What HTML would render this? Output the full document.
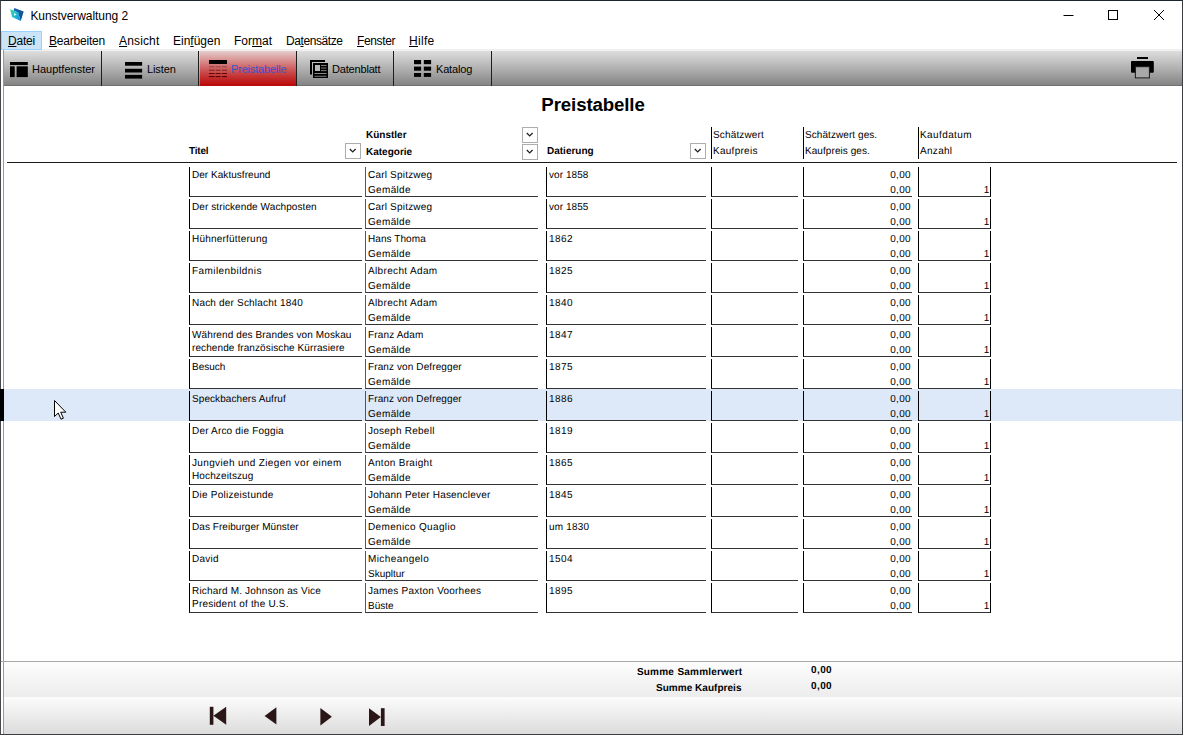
<!DOCTYPE html>
<html lang="de"><head><meta charset="utf-8"><title>Kunstverwaltung 2</title>
<style>
*{box-sizing:border-box;margin:0;padding:0}
html,body{width:1183px;height:735px;overflow:hidden;background:#fff}
body{position:relative;font-family:"Liberation Sans",sans-serif;font-size:10px;color:#000}
.abs{position:absolute}
#win{position:absolute;left:0;top:0;width:1183px;height:735px;border:1px solid #3a3d42;border-top-color:#1c2530;border-left-color:#44474c}
#title{position:absolute;left:30.4px;top:8px;font-size:12px;line-height:16px;color:#000;white-space:nowrap;letter-spacing:-0.06px}
#menu{z-index:3;position:absolute;left:1px;top:31px;height:19px;width:1181px;font-size:12px;line-height:19px;white-space:nowrap}
#menu span.m{position:absolute;top:1px;height:19px;z-index:4}
#menu u{text-decoration:underline;text-underline-offset:1px}
#menu .hl{z-index:3;position:absolute;left:0;top:0;width:41px;height:19px;background:#cce4f7;border:1px solid #99d1ff}
#tb{position:absolute;left:4px;top:49px;width:1178px;height:37px;background:linear-gradient(#f0f0f0 0,#f0f0f0 2px,#dddddd 2px,#b2b2b2 19px,#848484 36px,#707070 36px,#707070 37px)}
.tbtn{position:absolute;top:2px;height:35px;font-size:11px;line-height:35px;white-space:nowrap}
.sep{position:absolute;top:2px;width:1px;height:35px;background:#1e1e1e}
.tbtn svg{position:absolute}
.tbtn .t{position:absolute;top:0.5px}
#lline{position:absolute;left:3px;top:50px;width:1px;height:684px;background:#9a9a9a}
#h1{position:absolute;left:0;top:94px;width:1183px;text-align:center;font-size:18.67px;font-weight:bold;line-height:22px;padding-left:3px;letter-spacing:-0.12px}
.hd{position:absolute;font-weight:bold;font-size:10px;line-height:12px;white-space:nowrap;transform:skewX(0.05deg) scaleY(1.02);transform-origin:0 10px}
.hn{position:absolute;font-size:10px;line-height:12px;white-space:nowrap;transform:skewX(0.05deg) scaleY(1.02);transform-origin:0 10px}
.dd{position:absolute;width:16px;height:16px;border:1px solid #adadad;background:#fff}
.dd svg{position:absolute;left:0;top:0}
.vb{position:absolute;width:1px;background:#000}
#hline{position:absolute;left:7px;top:162px;width:1170px;height:1px;background:#1a1a1a}
.row{position:absolute;left:4px;width:1178px;height:32px}
.row.sel{background:#dde9f9}
.f{position:absolute;top:2px;height:30px;border-left:1px solid #000;border-bottom:1px solid #333;font-size:10px;line-height:13px;white-space:nowrap;padding:2px 0 0 2px}
.f1{left:185px;width:173px}
.f2{left:361px;width:173px;border-left-color:#555}
.f3{left:542px;width:160px}
.f4{left:707px;width:87px}
.f5{left:799px;width:109px;text-align:right;padding-right:2px}
.f6{left:914px;width:73px;border-right:1px solid #000;text-align:right;padding-right:1px}
.f .tx{position:absolute;left:1.5px;top:1px;line-height:13px;transform:skewX(0.05deg) scaleY(1.02);transform-origin:0 10px}
.f .l1,.f .l2{position:absolute;left:1.6px;right:2px;line-height:13px;transform:skewX(0.05deg) scaleY(1.02);transform-origin:0 10px}
.f .l1{top:1px}.f .l2{top:16px}
.f6 .l2{right:1px}
#fline{position:absolute;left:1px;top:661px;width:1181px;height:1px;background:#a8a8a8}
#sum{position:absolute;left:4px;top:662px;width:1178px;height:35px;background:linear-gradient(#fdfdfd,#ececec)}
#nav{position:absolute;left:4px;top:697px;width:1178px;height:37px;background:linear-gradient(#fcfcfc,#dcdcdc)}
.sb{position:absolute;font-weight:bold;font-size:10px;line-height:12px;white-space:nowrap;transform:skewX(0.05deg) scaleY(1.02);transform-origin:0 10px}
.f5 .l1,.f5 .l2{right:1.5px}
</style></head>
<body>
<div id="win"></div>
<svg class="abs" style="left:8px;top:6px" width="18" height="18" viewBox="0 0 18 18"><defs><linearGradient id="gf" x1="0" y1="0" x2="1" y2="0.6"><stop offset="0" stop-color="#45d6a2"/><stop offset="0.5" stop-color="#25c0c8"/><stop offset="1" stop-color="#1598e6"/></linearGradient><linearGradient id="gb" x1="0" y1="0" x2="1" y2="1"><stop offset="0" stop-color="#1668b0"/><stop offset="1" stop-color="#0f4a86"/></linearGradient></defs><path d="M6.3 2 L15.7 5.4 L12.7 15.2 L10 6.4 L5.6 4.4 Z" fill="url(#gb)"/><path d="M2 3.2 L10.2 6.2 L12.7 15 L4.1 10.9 Z" fill="url(#gf)"/><path d="M5.9 6.9 L8.5 8.2 L6.4 9.9 Z" fill="#eafffb"/></svg>
<div id="title">Kunstverwaltung 2</div>
<svg class="abs" style="left:1060px;top:5px" width="120" height="22" viewBox="0 0 120 22"><path d="M3.5 10.5 H13.5" stroke="#000" stroke-width="1" fill="none"/><rect x="48.5" y="5.5" width="9" height="9" stroke="#000" stroke-width="1" fill="none"/><path d="M94 5 L104 15 M104 5 L94 15" stroke="#000" stroke-width="1" fill="none"/></svg>
<div id="menu"><div class="hl"></div>
<span class="m" style="left:7px;letter-spacing:-0.2px"><u>D</u>atei</span>
<span class="m" style="left:48px;letter-spacing:-0.2px"><u>B</u>earbeiten</span>
<span class="m" style="left:118px;letter-spacing:0.15px"><u>A</u>nsicht</span>
<span class="m" style="left:172px">Ein<u>f</u>ügen</span>
<span class="m" style="left:233px">For<u>m</u>at</span>
<span class="m" style="left:285px;letter-spacing:-0.42px">Da<u>t</u>ensätze</span>
<span class="m" style="left:356px;letter-spacing:-0.36px"><u>F</u>enster</span>
<span class="m" style="left:408px;letter-spacing:0.3px"><u>H</u>ilfe</span>
</div>
<div id="tb">
 <div class="tbtn" style="left:0;width:97px"><svg style="left:6px;top:10.6px" width="18" height="16" viewBox="0 0 18 16"><rect x="0" y="0" width="17.8" height="3.1" fill="#000"/><rect x="0" y="4.3" width="4.7" height="10.8" fill="#000"/><rect x="6.6" y="4.3" width="11.2" height="10.8" fill="#000"/></svg><span class="t" style="left:28px">Hauptfenster</span></div>
 <div class="sep" style="left:97px"></div>
 <div class="tbtn" style="left:99px;width:96px"><svg style="left:22px;top:10.7px" width="18" height="17" viewBox="0 0 18 17"><rect x="0" y="0" width="17.1" height="3.7" fill="#000"/><rect x="0" y="6.8" width="17.1" height="3.7" fill="#000"/><rect x="0" y="12.9" width="17.1" height="3.7" fill="#000"/></svg><span class="t" style="left:44px;letter-spacing:-0.1px">Listen</span></div>
 <div class="sep" style="left:194px"></div>
 <div class="tbtn" style="left:196px;width:96px;background:linear-gradient(#e6cccc 0,#dba0a0 7px,#ce6262 17px,#c43030 26px,#bd1010 33px,#b40a0a 35px);color:#3a55c8"><svg style="left:9px;top:9px" width="18" height="18" viewBox="0 0 18 18"><rect x="0" y="0" width="18" height="4" fill="#000"/><g fill="#8c4646"><rect x="0" y="6.3" width="5.6" height="1"/><rect x="6.6" y="6.3" width="5" height="1"/><rect x="12.8" y="6.3" width="5.2" height="1"/></g><g fill="#7a2424"><rect x="0" y="9.7" width="5.6" height="1"/><rect x="6.6" y="9.7" width="5" height="1"/><rect x="12.8" y="9.7" width="5.2" height="1"/></g><g fill="#5a0808"><rect x="0" y="13" width="5.6" height="1"/><rect x="6.6" y="13" width="5" height="1"/><rect x="12.8" y="13" width="5.2" height="1"/></g><g fill="#4a0000"><rect x="0" y="16.1" width="5.6" height="1"/><rect x="6.6" y="16.1" width="5" height="1"/><rect x="12.8" y="16.1" width="5.2" height="1"/></g></svg><span class="t" style="left:31px;letter-spacing:-0.17px">Preistabelle</span></div>
 <div class="sep" style="left:292px"></div>
 <div class="tbtn" style="left:294px;width:96px"><svg style="left:12px;top:9px" width="18" height="18" viewBox="0 0 18 18"><path d="M0 0 H15 V1.9 H2 V14.6 H0 Z" fill="#000"/><rect x="3" y="3" width="15" height="15" fill="#000"/><rect x="5" y="5" width="5" height="6" fill="#b8b8b8"/><rect x="11" y="5" width="5.5" height="0.9" fill="#8c8c8c"/><rect x="11" y="7.6" width="5.5" height="0.9" fill="#8c8c8c"/><rect x="11" y="10.2" width="5.5" height="0.9" fill="#8c8c8c"/><rect x="4.5" y="13.1" width="12" height="0.9" fill="#9a9a9a"/><rect x="4.5" y="15.8" width="12" height="0.9" fill="#8a8a8a"/></svg><span class="t" style="left:34px;letter-spacing:-0.18px">Datenblatt</span></div>
 <div class="sep" style="left:389px"></div>
 <div class="tbtn" style="left:392px;width:95px"><svg style="left:18px;top:9px" width="18" height="17" viewBox="0 0 18 17"><rect x="0" y="0" width="7.1" height="4.2" fill="#000"/><rect x="9.8" y="0" width="7.3" height="4.2" fill="#000"/><rect x="0" y="6.6" width="7.1" height="4.1" fill="#000"/><rect x="9.8" y="6.6" width="7.3" height="4.1" fill="#000"/><rect x="0" y="13" width="7.1" height="3.9" fill="#000"/><rect x="9.8" y="13" width="7.3" height="3.9" fill="#000"/></svg><span class="t" style="left:40px;letter-spacing:-0.17px">Katalog</span></div>
 <div class="sep" style="left:487px"></div>
 <svg class="abs" style="left:1127px;top:8px" width="24" height="23" viewBox="0 0 24 23"><rect x="6" y="0" width="11" height="2" fill="#000"/><path d="M1 4 H21.8 Q22.8 4 22.8 5 V14.8 Q22.8 15.8 21.8 15.8 H1 Q0 15.8 0 14.8 V5 Q0 4 1 4 Z" fill="#000"/><rect x="4.4" y="9.7" width="14" height="11.2" fill="#a8a8a8" stroke="#1a1a1a" stroke-width="1"/></svg>
</div>
<div id="lline"></div>
<div id="h1">Preistabelle</div>
<div class="hd" style="left:189px;top:145px;letter-spacing:-0.2px">Titel</div>
<div class="hd" style="left:366px;top:129px">Künstler</div>
<div class="hd" style="left:366px;top:146px">Kategorie</div>
<div class="hd" style="left:547px;top:145px">Datierung</div>
<div class="dd" style="left:345px;top:143px"><svg width="14" height="14" viewBox="0 0 14 14"><path d="M3.8 5 L6.7 7.9 L9.6 5" fill="none" stroke="#222" stroke-width="1.35"/></svg></div>
<div class="dd" style="left:522px;top:127px"><svg width="14" height="14" viewBox="0 0 14 14"><path d="M3.8 5 L6.7 7.9 L9.6 5" fill="none" stroke="#222" stroke-width="1.35"/></svg></div>
<div class="dd" style="left:522px;top:144px"><svg width="14" height="14" viewBox="0 0 14 14"><path d="M3.8 5 L6.7 7.9 L9.6 5" fill="none" stroke="#222" stroke-width="1.35"/></svg></div>
<div class="dd" style="left:690px;top:143px"><svg width="14" height="14" viewBox="0 0 14 14"><path d="M3.8 5 L6.7 7.9 L9.6 5" fill="none" stroke="#222" stroke-width="1.35"/></svg></div>
<div class="vb" style="left:711px;top:127px;height:32px"></div>
<div class="vb" style="left:803px;top:127px;height:32px"></div>
<div class="vb" style="left:918px;top:127px;height:32px"></div>
<div class="hn" style="left:713.2px;top:129px;letter-spacing:0.15px">Schätzwert</div>
<div class="hn" style="left:713.2px;top:145px;letter-spacing:0.27px">Kaufpreis</div>
<div class="hn" style="left:805.4px;top:129px;letter-spacing:0.07px">Schätzwert ges.</div>
<div class="hn" style="left:805.4px;top:145px;letter-spacing:0.07px">Kaufpreis ges.</div>
<div class="hn" style="left:920.3px;top:129px;letter-spacing:0.4px">Kaufdatum</div>
<div class="hn" style="left:920.3px;top:145px;letter-spacing:0.3px">Anzahl</div>
<div id="hline"></div>

<div class="row" style="top:165px"><div class="f f1"><div class="tx"><span style="letter-spacing:0.04px">Der Kaktusfreund</span></div></div><div class="f f2"><span class="l1"><span style="letter-spacing:0.20px">Carl Spitzweg</span></span><span class="l2"><span style="letter-spacing:0.33px">Gemälde</span></span></div><div class="f f3"><div class="tx"><span style="letter-spacing:0.06px">vor 1858</span></div></div><div class="f f4"></div><div class="f f5"><span class="l1" style="letter-spacing:0.3px">0,00</span><span class="l2" style="letter-spacing:0.3px">0,00</span></div><div class="f f6"><span class="l2">1</span></div></div>
<div class="row" style="top:197px"><div class="f f1"><div class="tx"><span style="letter-spacing:0.09px">Der strickende Wachposten</span></div></div><div class="f f2"><span class="l1"><span style="letter-spacing:0.20px">Carl Spitzweg</span></span><span class="l2"><span style="letter-spacing:0.33px">Gemälde</span></span></div><div class="f f3"><div class="tx"><span style="letter-spacing:0.06px">vor 1855</span></div></div><div class="f f4"></div><div class="f f5"><span class="l1" style="letter-spacing:0.3px">0,00</span><span class="l2" style="letter-spacing:0.3px">0,00</span></div><div class="f f6"><span class="l2">1</span></div></div>
<div class="row" style="top:229px"><div class="f f1"><div class="tx"><span style="letter-spacing:0.21px">Hühnerfütterung</span></div></div><div class="f f2"><span class="l1"><span style="letter-spacing:0.07px">Hans Thoma</span></span><span class="l2"><span style="letter-spacing:0.33px">Gemälde</span></span></div><div class="f f3"><div class="tx"><span style="letter-spacing:0.40px">1862</span></div></div><div class="f f4"></div><div class="f f5"><span class="l1" style="letter-spacing:0.3px">0,00</span><span class="l2" style="letter-spacing:0.3px">0,00</span></div><div class="f f6"><span class="l2">1</span></div></div>
<div class="row" style="top:261px"><div class="f f1"><div class="tx"><span style="letter-spacing:0.42px">Familenbildnis</span></div></div><div class="f f2"><span class="l1"><span style="letter-spacing:0.34px">Albrecht Adam</span></span><span class="l2"><span style="letter-spacing:0.33px">Gemälde</span></span></div><div class="f f3"><div class="tx"><span style="letter-spacing:0.40px">1825</span></div></div><div class="f f4"></div><div class="f f5"><span class="l1" style="letter-spacing:0.3px">0,00</span><span class="l2" style="letter-spacing:0.3px">0,00</span></div><div class="f f6"><span class="l2">1</span></div></div>
<div class="row" style="top:293px"><div class="f f1"><div class="tx"><span style="letter-spacing:0.19px">Nach der Schlacht 1840</span></div></div><div class="f f2"><span class="l1"><span style="letter-spacing:0.34px">Albrecht Adam</span></span><span class="l2"><span style="letter-spacing:0.33px">Gemälde</span></span></div><div class="f f3"><div class="tx"><span style="letter-spacing:0.40px">1840</span></div></div><div class="f f4"></div><div class="f f5"><span class="l1" style="letter-spacing:0.3px">0,00</span><span class="l2" style="letter-spacing:0.3px">0,00</span></div><div class="f f6"><span class="l2">1</span></div></div>
<div class="row" style="top:325px"><div class="f f1"><div class="tx"><span style="letter-spacing:0.11px">Während des Brandes von Moskau</span><br><span style="letter-spacing:0.10px">rechende französische Kürrasiere</span></div></div><div class="f f2"><span class="l1"><span style="letter-spacing:0.15px">Franz Adam</span></span><span class="l2"><span style="letter-spacing:0.33px">Gemälde</span></span></div><div class="f f3"><div class="tx"><span style="letter-spacing:0.40px">1847</span></div></div><div class="f f4"></div><div class="f f5"><span class="l1" style="letter-spacing:0.3px">0,00</span><span class="l2" style="letter-spacing:0.3px">0,00</span></div><div class="f f6"><span class="l2">1</span></div></div>
<div class="row" style="top:357px"><div class="f f1"><div class="tx"><span style="letter-spacing:0.00px">Besuch</span></div></div><div class="f f2"><span class="l1"><span style="letter-spacing:0.11px">Franz von Defregger</span></span><span class="l2"><span style="letter-spacing:0.33px">Gemälde</span></span></div><div class="f f3"><div class="tx"><span style="letter-spacing:0.40px">1875</span></div></div><div class="f f4"></div><div class="f f5"><span class="l1" style="letter-spacing:0.3px">0,00</span><span class="l2" style="letter-spacing:0.3px">0,00</span></div><div class="f f6"><span class="l2">1</span></div></div>
<div class="row sel" style="top:389px"><div class="f f1"><div class="tx"><span style="letter-spacing:0.08px">Speckbachers Aufruf</span></div></div><div class="f f2"><span class="l1"><span style="letter-spacing:0.11px">Franz von Defregger</span></span><span class="l2"><span style="letter-spacing:0.33px">Gemälde</span></span></div><div class="f f3"><div class="tx"><span style="letter-spacing:0.40px">1886</span></div></div><div class="f f4"></div><div class="f f5"><span class="l1" style="letter-spacing:0.3px">0,00</span><span class="l2" style="letter-spacing:0.3px">0,00</span></div><div class="f f6"><span class="l2">1</span></div></div>
<div class="row" style="top:421px"><div class="f f1"><div class="tx"><span style="letter-spacing:0.18px">Der Arco die Foggia</span></div></div><div class="f f2"><span class="l1"><span style="letter-spacing:0.25px">Joseph Rebell</span></span><span class="l2"><span style="letter-spacing:0.33px">Gemälde</span></span></div><div class="f f3"><div class="tx"><span style="letter-spacing:0.40px">1819</span></div></div><div class="f f4"></div><div class="f f5"><span class="l1" style="letter-spacing:0.3px">0,00</span><span class="l2" style="letter-spacing:0.3px">0,00</span></div><div class="f f6"><span class="l2">1</span></div></div>
<div class="row" style="top:453px"><div class="f f1"><div class="tx"><span style="letter-spacing:0.35px">Jungvieh und Ziegen vor einem</span><br><span style="letter-spacing:0.12px">Hochzeitszug</span></div></div><div class="f f2"><span class="l1"><span style="letter-spacing:0.30px">Anton Braight</span></span><span class="l2"><span style="letter-spacing:0.33px">Gemälde</span></span></div><div class="f f3"><div class="tx"><span style="letter-spacing:0.40px">1865</span></div></div><div class="f f4"></div><div class="f f5"><span class="l1" style="letter-spacing:0.3px">0,00</span><span class="l2" style="letter-spacing:0.3px">0,00</span></div><div class="f f6"><span class="l2">1</span></div></div>
<div class="row" style="top:485px"><div class="f f1"><div class="tx"><span style="letter-spacing:0.26px">Die Polizeistunde</span></div></div><div class="f f2"><span class="l1"><span style="letter-spacing:0.19px">Johann Peter Hasenclever</span></span><span class="l2"><span style="letter-spacing:0.33px">Gemälde</span></span></div><div class="f f3"><div class="tx"><span style="letter-spacing:0.40px">1845</span></div></div><div class="f f4"></div><div class="f f5"><span class="l1" style="letter-spacing:0.3px">0,00</span><span class="l2" style="letter-spacing:0.3px">0,00</span></div><div class="f f6"><span class="l2">1</span></div></div>
<div class="row" style="top:517px"><div class="f f1"><div class="tx"><span style="letter-spacing:0.05px">Das Freiburger Münster</span></div></div><div class="f f2"><span class="l1"><span style="letter-spacing:0.35px">Demenico Quaglio</span></span><span class="l2"><span style="letter-spacing:0.33px">Gemälde</span></span></div><div class="f f3"><div class="tx"><span style="letter-spacing:0.20px">um 1830</span></div></div><div class="f f4"></div><div class="f f5"><span class="l1" style="letter-spacing:0.3px">0,00</span><span class="l2" style="letter-spacing:0.3px">0,00</span></div><div class="f f6"><span class="l2">1</span></div></div>
<div class="row" style="top:549px"><div class="f f1"><div class="tx"><span style="letter-spacing:0.22px">David</span></div></div><div class="f f2"><span class="l1"><span style="letter-spacing:0.41px">Micheangelo</span></span><span class="l2"><span style="letter-spacing:0.00px">Skupltur</span></span></div><div class="f f3"><div class="tx"><span style="letter-spacing:0.40px">1504</span></div></div><div class="f f4"></div><div class="f f5"><span class="l1" style="letter-spacing:0.3px">0,00</span><span class="l2" style="letter-spacing:0.3px">0,00</span></div><div class="f f6"><span class="l2">1</span></div></div>
<div class="row" style="top:581px"><div class="f f1"><div class="tx"><span style="letter-spacing:0.18px">Richard M. Johnson as Vice</span><br><span style="letter-spacing:0.21px">President of the U.S.</span></div></div><div class="f f2"><span class="l1"><span style="letter-spacing:0.23px">James Paxton Voorhees</span></span><span class="l2"><span style="letter-spacing:0.00px">Büste</span></span></div><div class="f f3"><div class="tx"><span style="letter-spacing:0.40px">1895</span></div></div><div class="f f4"></div><div class="f f5"><span class="l1" style="letter-spacing:0.3px">0,00</span><span class="l2" style="letter-spacing:0.3px">0,00</span></div><div class="f f6"><span class="l2">1</span></div></div>
<div class="abs" style="left:0;top:389px;width:4px;height:32px;background:#000"></div>
<svg class="abs" style="left:53px;top:399px" width="14" height="22" viewBox="0 0 14 22"><path d="M1.5 1.5 V17.5 L5.2 14 L8 20.2 L10.4 19.2 L7.7 13.2 H12.8 Z" fill="#fff" stroke="#000" stroke-width="1" stroke-linejoin="miter"/></svg>
<div id="fline"></div>
<div id="sum">
 <div class="sb" style="right:439.6px;top:4px;word-spacing:0.6px;letter-spacing:0.17px">Summe Sammlerwert</div>
 <div class="sb" style="right:440.4px;top:20px;letter-spacing:0.03px">Summe Kaufpreis</div>
 <div class="sb" style="left:807px;top:2px;letter-spacing:0.4px">0,00</div>
 <div class="sb" style="left:807px;top:18px;letter-spacing:0.4px">0,00</div>
</div>
<div id="nav">
 <svg class="abs" style="left:205px;top:9px" width="182" height="21" viewBox="0 0 182 21"><g fill="#2a1517"><rect x="0.8" y="0.8" width="3.6" height="18"/><path d="M17.2 0.8 V18.8 L4.4 9.8 Z"/><path d="M67.4 1.2 V18.6 L55.6 9.9 Z"/><path d="M111.4 2 V19.4 L122.9 10.7 Z"/><path d="M160 2.2 V20 L171.9 11.1 Z"/><rect x="171.9" y="2.2" width="3.7" height="17.8"/></g></svg>
</div>

</body></html>
